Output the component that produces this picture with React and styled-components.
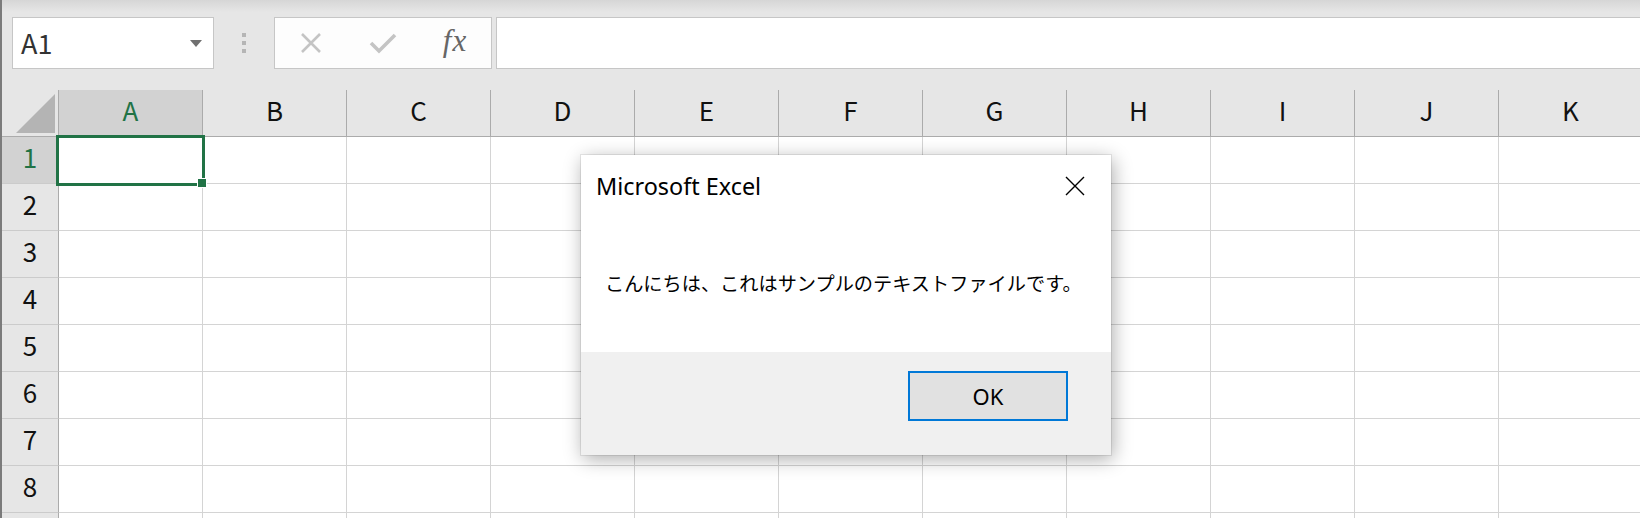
import React from 'react'
import styled, { createGlobalStyle } from 'styled-components'

const GlobalStyle = createGlobalStyle`
  html, body {
    margin: 0;
    padding: 0;
    background: #fff;
    overflow: hidden;
  }
`

const COLUMNS = ['A', 'B', 'C', 'D', 'E', 'F', 'G', 'H', 'I', 'J', 'K']
const ROWS = [1, 2, 3, 4, 5, 6, 7, 8, 9]

const Window = styled.div`
  position: relative;
  width: 1640px;
  height: 518px;
  overflow: hidden;
  box-sizing: border-box;
  border-left: 2px solid #7b7b7b;
  background: #fff;
  font-family: 'Noto Sans CJK JP', 'Noto Sans', sans-serif;
`

/* ---------- formula bar ---------- */

const FormulaBar = styled.div`
  display: flex;
  align-items: flex-start;
  height: 90px;
  box-sizing: border-box;
  padding: 17px 0 0 10px;
  background: linear-gradient(#d6d6d6, #e6e6e6 12px);
`

const NameBox = styled.div`
  display: flex;
  align-items: center;
  justify-content: space-between;
  flex: none;
  width: 202px;
  height: 52px;
  box-sizing: border-box;
  padding: 0 11px 2px 8px;
  border: 1px solid #c6c6c6;
  background: #fff;
  font-size: 27px;
  color: #333;
`

const DropArrow = styled.span`
  width: 0;
  height: 0;
  margin-top: 2px;
  border-left: 6.5px solid transparent;
  border-right: 6.5px solid transparent;
  border-top: 7px solid #707070;
`

const Grip = styled.div`
  display: flex;
  flex-direction: column;
  gap: 4.5px;
  margin: 16px 28px 0;
`

const GripDot = styled.span`
  width: 4px;
  height: 3.5px;
  background: #b5b5b5;
`

const FormulaButtons = styled.div`
  display: flex;
  flex: none;
  width: 218px;
  height: 52px;
  box-sizing: border-box;
  border: 1px solid #c6c6c6;
  background: #fdfdfd;
`

const FormulaButton = styled.div`
  flex: 1;
  display: flex;
  align-items: center;
  justify-content: center;
`

const FxLabel = styled.span`
  font-family: 'Liberation Serif', serif;
  font-style: italic;
  font-size: 31px;
  letter-spacing: 1px;
  color: #666;
  margin-top: -4px;
`

const FormulaInput = styled.div`
  flex: 1;
  height: 52px;
  margin-left: 4px;
  box-sizing: border-box;
  border: 1px solid #c6c6c6;
  border-right: none;
  background: #fff;
`

/* ---------- grid ---------- */

const HeaderRow = styled.div`
  display: flex;
  height: 47px;
  box-sizing: border-box;
  border-bottom: 1px solid #ababab;
  background: #e6e6e6;
`

const Corner = styled.div`
  position: relative;
  flex: none;
  width: 57px;
  box-sizing: border-box;
  border-right: 1px solid #ababab;

  &::after {
    content: '';
    position: absolute;
    right: 3px;
    bottom: 3px;
    width: 39px;
    height: 39px;
    background: #b4b4b4;
    clip-path: polygon(100% 0, 100% 100%, 0 100%);
  }
`

const ColHeader = styled.div`
  display: flex;
  align-items: center;
  justify-content: center;
  flex: none;
  width: 144px;
  box-sizing: border-box;
  padding-bottom: 7px;
  border-right: 1px solid #ababab;
  font-size: 26px;
  color: ${(p) => (p.$active ? '#217346' : '#111')};
  background: ${(p) => (p.$active ? '#d2d2d2' : 'transparent')};
`

const Row = styled.div`
  display: flex;
  height: 47px;
`

const RowHeader = styled.div`
  display: flex;
  align-items: center;
  justify-content: center;
  flex: none;
  width: 57px;
  box-sizing: border-box;
  padding-bottom: 7px;
  border-right: 1px solid #ababab;
  border-bottom: 1px solid #cbcbcb;
  font-size: 26px;
  color: ${(p) => (p.$active ? '#217346' : '#111')};
  background: ${(p) => (p.$active ? '#d2d2d2' : '#e6e6e6')};
`

const Cell = styled.div`
  position: relative;
  flex: none;
  width: 144px;
  box-sizing: border-box;
  border-right: 1px solid #d4d4d4;
  border-bottom: 1px solid #d4d4d4;
  background: #fff;
`

const Selection = styled.div`
  position: absolute;
  left: -3px;
  top: -2px;
  width: 149px;
  height: 51px;
  box-sizing: border-box;
  border: 3px solid #217346;
  z-index: 2;
`

const FillHandle = styled.span`
  position: absolute;
  right: -4px;
  bottom: -4px;
  width: 8px;
  height: 8px;
  background: #217346;
  box-shadow: 0 0 0 1px #fff;
`

/* ---------- message box ---------- */

const Dialog = styled.div`
  position: absolute;
  left: 579px;
  top: 155px;
  width: 530px;
  height: 300px;
  display: flex;
  flex-direction: column;
  background: #fff;
  box-shadow: 0 0 0 1px rgba(0, 0, 0, 0.08), 2px 4px 18px rgba(0, 0, 0, 0.33);
  z-index: 5;
`

const DialogBody = styled.div`
  flex: 1;
  display: flex;
  flex-direction: column;
`

const TitleBar = styled.div`
  display: flex;
  align-items: center;
  justify-content: space-between;
  height: 62px;
  padding: 0 26px 0 15px;
`

const Title = styled.span`
  font-family: 'Noto Sans', sans-serif;
  font-size: 23.4px;
  color: #000;
`

const CloseIcon = styled.svg`
  width: 20px;
  height: 20px;
  display: block;
`

const Message = styled.p`
  margin: 51px 0 0 24px;
  line-height: 30px;
  font-size: 19.2px;
  color: #000;
`

const DialogFooter = styled.div`
  display: flex;
  justify-content: flex-end;
  align-items: flex-start;
  height: 103px;
  box-sizing: border-box;
  padding: 19px 43px 0 0;
  background: #f0f0f0;
`

const OkButton = styled.button`
  width: 160px;
  height: 50px;
  box-sizing: border-box;
  border: 2px solid #0078d7;
  background: #e1e1e1;
  font-family: 'Noto Sans', sans-serif;
  font-size: 22px;
  color: #000;
  padding: 0;
`

const App = () => {
  return (
    <Window>
      <GlobalStyle />
      <FormulaBar>
        <NameBox>
          A1
          <DropArrow />
        </NameBox>
        <Grip>
          <GripDot />
          <GripDot />
          <GripDot />
        </Grip>
        <FormulaButtons>
          <FormulaButton>
            <svg width="22" height="22" viewBox="0 0 22 22">
              <path d="M2 2 L20 20 M20 2 L2 20" stroke="#c4c4c4" strokeWidth="2.6" fill="none" />
            </svg>
          </FormulaButton>
          <FormulaButton>
            <svg width="28" height="22" viewBox="0 0 28 22">
              <path d="M2 11 L10 19 L26 3" stroke="#c4c4c4" strokeWidth="3.6" fill="none" />
            </svg>
          </FormulaButton>
          <FormulaButton>
            <FxLabel>fx</FxLabel>
          </FormulaButton>
        </FormulaButtons>
        <FormulaInput />
      </FormulaBar>

      <HeaderRow>
        <Corner />
        {COLUMNS.map((c) => (
          <ColHeader key={c} $active={c === 'A'}>
            {c}
          </ColHeader>
        ))}
      </HeaderRow>
      {ROWS.map((r) => (
        <Row key={r}>
          <RowHeader $active={r === 1}>{r}</RowHeader>
          {COLUMNS.map((c) => (
            <Cell key={c}>
              {r === 1 && c === 'A' && (
                <Selection>
                  <FillHandle />
                </Selection>
              )}
            </Cell>
          ))}
        </Row>
      ))}

      <Dialog>
        <DialogBody>
          <TitleBar>
            <Title>Microsoft Excel</Title>
            <CloseIcon viewBox="0 0 20 20">
              <path d="M1 1 L19 19 M19 1 L1 19" stroke="#000" strokeWidth="1.4" fill="none" />
            </CloseIcon>
          </TitleBar>
          <Message>こんにちは、これはサンプルのテキストファイルです。</Message>
        </DialogBody>
        <DialogFooter>
          <OkButton>OK</OkButton>
        </DialogFooter>
      </Dialog>
    </Window>
  )
}

export default App
